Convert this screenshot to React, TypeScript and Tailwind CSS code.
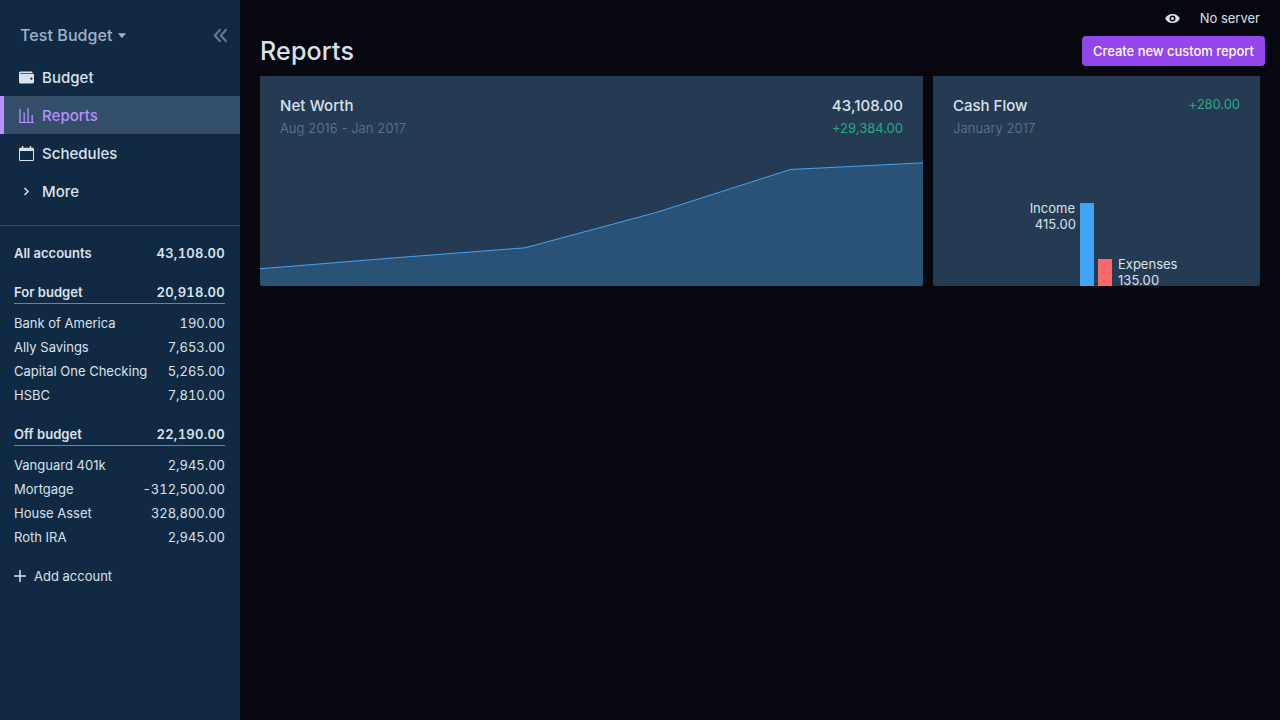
import React from "react";

type Account = { name: string; balance: string };

const forBudget: Account[] = [
  { name: "Bank of America", balance: "190.00" },
  { name: "Ally Savings", balance: "7,653.00" },
  { name: "Capital One Checking", balance: "5,265.00" },
  { name: "HSBC", balance: "7,810.00" },
];

const offBudget: Account[] = [
  { name: "Vanguard 401k", balance: "2,945.00" },
  { name: "Mortgage", balance: "-312,500.00" },
  { name: "House Asset", balance: "328,800.00" },
  { name: "Roth IRA", balance: "2,945.00" },
];

function WalletIcon() {
  return (
    <svg width="15" height="15" viewBox="0 0 20 20" fill="currentColor">
      <path d="M0 4c0-1.100.9-2 2-2h15a1 1 0 0 1 1 1v1H2v1h17a1 1 0 0 1 1 1v10a2 2 0 0 1-2 2H2a2 2 0 0 1-2-2V4zm16.500 9a1.500 1.500 0 1 0 0-3 1.500 1.500 0 0 0 0 3z" />
    </svg>
  );
}

function ReportsIcon() {
  return (
    <svg width="15" height="15" viewBox="0 0 15 15" fill="currentColor">
      <path d="M0 13.900h15V15H0zM0.400 1h1.300v13H0.400zM4.500 4.500h1.300v9.500H4.500zM8.400 0h1.300v14H8.400zM12.500 7h1.300v7h-1.300z" />
    </svg>
  );
}

function CalendarIcon() {
  return (
    <svg width="15" height="15" viewBox="0 0 15 15" fill="currentColor">
      <path d="M1.200 1.800H2.800V0h1.400v1.800h6.600V0h1.400v1.800h1.600A1.200 1.200 0 0 1 15 3v10.800a1.200 1.200 0 0 1-1.200 1.200H1.200A1.200 1.200 0 0 1 0 13.800V3a1.200 1.200 0 0 1 1.200-1.200zM1 5v8.500c0 .3.200.5.500.5h12c.3 0 .5-.2.500-.5V5z" />
    </svg>
  );
}

function ChevronIcon() {
  return (
    <svg width="15" height="15" viewBox="0 0 15 15" fill="none" stroke="currentColor" strokeWidth="1.500">
      <path d="M5.500 4l3.500 3.500L5.500 11" />
    </svg>
  );
}

function NavItem({ icon, label, active }: { icon: React.ReactNode; label: string; active?: boolean }) {
  return (
    <div
      className={
        active
          ? "flex h-[38px] items-center border-l-4 border-[#b990ff] bg-[#334e68] pl-[15px] text-[#b990ff]"
          : "flex h-[38px] items-center pl-[19px]"
      }
    >
      {icon}
      <span className="ml-2 pt-0.5 text-[15px] leading-5 font-medium tracking-[0.03px]">{label}</span>
    </div>
  );
}

function Group({ title, total, accounts }: { title: string; total: string; accounts: Account[] }) {
  return (
    <section className="mt-[15px] pr-[15px] pl-[14px]">
      <div className="mb-[7px] flex h-6 items-center justify-between border-b border-[#829ab1]/80 font-semibold">
        <span className="tracking-[0.05px]">{title}</span>
        <span className="tracking-[0.3px] tabular-nums">{total}</span>
      </div>
      {accounts.map((a) => (
        <div key={a.name} className="flex h-6 items-center justify-between">
          <span>{a.name}</span>
          <span className="tracking-[-0.03px] tabular-nums">{a.balance}</span>
        </div>
      ))}
    </section>
  );
}

export default function App() {
  return (
    <div className="flex h-screen overflow-hidden bg-[#06070f] font-['Inter',sans-serif] text-[13px] leading-4 text-[#d9e2ec]">
      <aside className="w-60 shrink-0 bg-[#102a43]">
        <div className="flex h-[58px] items-center justify-between pt-[13px] pr-3 pl-5 text-[#9fb3c8]">
          <div className="flex items-center gap-[5px]">
            <span className="pb-0.5 text-base font-medium tracking-[0.08px]">Test Budget</span>
            <svg width="8" height="5" viewBox="0 0 8 5" fill="currentColor">
              <path d="M0 .3h8L4.600 4.400a.8.8 0 0 1-1.200 0z" />
            </svg>
          </div>
          <svg width="15" height="15" viewBox="0 0 15 15" fill="none" stroke="#627d98" strokeWidth="2">
            <path d="M7.500 1.300L1.800 7.500l5.700 6.200M13.500 1.300L7.800 7.500l5.700 6.200" />
          </svg>
        </div>
        <nav>
          <NavItem icon={<WalletIcon />} label="Budget" />
          <NavItem icon={<ReportsIcon />} label="Reports" active />
          <NavItem icon={<CalendarIcon />} label="Schedules" />
          <NavItem icon={<ChevronIcon />} label="More" />
        </nav>
        <div className="mt-[15px] h-px bg-[#334e68]" />
        <div className="mt-[15px] flex h-6 items-center justify-between pr-[15px] pl-[14px] font-semibold">
          <span>All accounts</span>
          <span className="tracking-[0.3px] tabular-nums">43,108.00</span>
        </div>
        <Group title="For budget" total="20,918.00" accounts={forBudget} />
        <Group title="Off budget" total="22,190.00" accounts={offBudget} />
        <div className="mt-[15px] flex h-6 items-center gap-2 pl-[14px]">
          <svg width="12" height="12" viewBox="0 0 12 12" stroke="currentColor" strokeWidth="1.500">
            <path d="M6 0v12M0 6h12" />
          </svg>
          <span>Add account</span>
        </div>
      </aside>
      <main className="flex grow flex-col">
        <div className="flex h-9 items-center justify-end pr-5">
          <svg width="15" height="15" viewBox="0 0 20 20" fill="currentColor">
            <path d="M.2 10a11 11 0 0 1 19.600 0A11 11 0 0 1 .2 10zm9.800 4a4 4 0 1 0 0-8 4 4 0 0 0 0 8zm0-2a2 2 0 1 1 0-4 2 2 0 0 1 0 4z" />
          </svg>
          <span className="ml-5">No server</span>
        </div>
        <div className="flex h-[30px] items-center justify-between pr-[15px] pl-5">
          <h1 className="text-[25px] font-medium tracking-[0.18px]">Reports</h1>
          <button className="h-[30px] w-[183px] rounded bg-[#9446ed] text-center font-medium tracking-[-0.04px] whitespace-nowrap text-white">
            Create new custom report
          </button>
        </div>
        <div className="mt-[10px] flex gap-[10px] pl-5">
          <section className="flex h-[210px] w-[663px] flex-col overflow-hidden rounded-b-[2px] bg-[#243b53]">
            <div className="flex justify-between px-5 pt-5">
              <div>
                <h2 className="text-[15px] leading-[19px] font-medium tracking-[0.1px]">Net Worth</h2>
                <p className="mt-[5px] font-light tracking-[0.1px] text-[#627d98]">Aug 2016 - Jan 2017</p>
              </div>
              <div className="text-right">
                <p className="text-[15px] leading-[19px] font-medium tracking-[0.05px]">43,108.00</p>
                <p className="mt-[5px] text-[#27ab83]">+29,384.00</p>
              </div>
            </div>
            <svg className="mt-auto block" width="663" height="130" viewBox="0 0 663 130">
              <path d="M0 112.800L132.600 102 265.200 91.800 397.800 56 530.400 13.500 663 6.800V130H0z" fill="#40a5f7" fillOpacity="0.220" />
              <path d="M0 112.800L132.600 102 265.200 91.800 397.800 56 530.400 13.500 663 6.800" fill="none" stroke="#40a5f7" />
            </svg>
          </section>
          <section className="flex h-[210px] w-[327px] flex-col overflow-hidden rounded-b-[2px] bg-[#243b53]">
            <div className="flex justify-between px-5 pt-5">
              <div>
                <h2 className="text-[15px] leading-[19px] font-medium">Cash Flow</h2>
                <p className="mt-[5px] font-light tracking-[0.1px] text-[#627d98]">January 2017</p>
              </div>
              <p className="tracking-[-0.05px] text-[#27ab83]">+280.00</p>
            </div>
            <div className="mt-auto flex h-[83px] items-start">
              <div className="-mt-[3px] w-[143px] text-right">
                <p className="pr-px">Income</p>
                <p className="tracking-[0.08px]">415.00</p>
              </div>
              <div className="ml-1 h-[83px] w-[14px] bg-[#40a5f7]" />
              <div className="ml-1 h-[27px] w-[14px] self-end bg-[#f86a6a]" />
              <div className="mt-[53px] ml-1.5">
                <p>Expenses</p>
                <p className="tracking-[0.08px]">135.00</p>
              </div>
            </div>
          </section>
        </div>
      </main>
    </div>
  );
}
